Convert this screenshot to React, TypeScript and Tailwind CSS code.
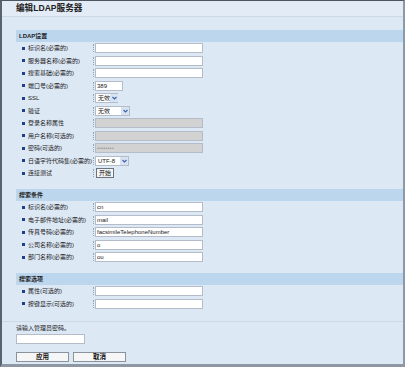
import React from 'react';

const font = { fontFamily: '"Liberation Sans", "Noto Sans CJK SC", sans-serif' };

const Field = ({ label, children }: { label: string; children: React.ReactNode }) => (
   <div className="flex items-center h-[12.5px]">
      <div className="flex items-center w-[77px] pl-[6px] gap-[3px] shrink-0">
         <span className="w-[3px] h-[3px] bg-[#1f3f8a] shrink-0" />
         <span className="text-[6px] leading-none text-[#222] whitespace-nowrap">{label}</span>
      </div>
      <span className="w-px h-[8px] border-l border-dotted border-[#9aa4b0] mr-[1px] shrink-0" />
      {children}
   </div>
);

const Input = ({ value = '', w = 'w-[108px]', gray = false }: { value?: string; w?: string; gray?: boolean }) => (
   <div className={`${w} h-[10px] shrink-0 border border-[#b3bcc8] ${gray ? 'bg-[#d2d2d2]' : 'bg-white'} flex items-center px-[1px]`}>
      <span className={`text-[6px] leading-none whitespace-nowrap ${gray ? 'text-[#9a9a9a]' : 'text-[#222]'}`}>{value}</span>
   </div>
);

const Select = ({ value, w }: { value: string; w: string }) => (
   <div className={`${w} h-[10px] shrink-0 border border-[#b3bcc8] bg-white flex items-center justify-between pl-[2px]`}>
      <span className="text-[6px] leading-none text-[#222] whitespace-nowrap">{value}</span>
      <span className="w-[8px] h-full shrink-0 bg-[#d7e3f3] flex items-center justify-center">
         <svg width="5" height="4" viewBox="0 0 5 4"><path d="M0.5 1 L2.5 3 L4.5 1" stroke="#3a5fa8" strokeWidth="1.1" fill="none" /></svg>
      </span>
   </div>
);

const Header = ({ title }: { title: string }) => (
   <div className="h-[12px] bg-[#bcd6ee] flex items-center pl-[3px]">
      <span className="text-[6px] font-bold leading-none text-[#222]">{title}</span>
   </div>
);

const App = () => {
   return (
      <div style={font} className="w-[405px] h-[367px] bg-[#dde8f5] border-l-2 border-l-[#59626e] border-t border-t-[#4d5560] border-r-2 border-r-[#8d99a7] border-b-[3px] border-b-[#8e98a4] overflow-hidden">
         <div className="h-[16px] bg-[#e3ecf6] border-b border-[#cdd9e7] flex items-center pl-[14px]">
            <span className="text-[8.6px] font-bold text-[#222] leading-none">编辑LDAP服务器</span>
         </div>
         <div className="pl-[14px] pt-[13px]">
            <Header title="LDAP设置" />
            <Field label="标识名(必需的)"><Input /></Field>
            <Field label="服务器名称(必需的)"><Input /></Field>
            <Field label="搜索基础(必需的)"><Input /></Field>
            <Field label="端口号(必需的)"><Input value="389" w="w-[28px]" /></Field>
            <Field label="SSL"><Select value="无效" w="w-[23px]" /></Field>
            <Field label="验证"><Select value="无效" w="w-[35px]" /></Field>
            <Field label="登录名称属性"><Input gray /></Field>
            <Field label="用户名称(可选的)"><Input gray /></Field>
            <Field label="密码(可选的)"><Input gray value="••••••••" /></Field>
            <Field label="日语字符代码集(必需的)"><Select value="UTF-8" w="w-[34px]" /></Field>
            <Field label="连接测试">
               <button className="h-[10px] px-[2px] border border-[#6b7480] bg-[#f4f4f4] text-[6px] leading-none text-[#111] ml-[1px]">开始</button>
            </Field>

            <div className="h-[9px]" />
            <Header title="搜索条件" />
            <div className="flex flex-col">
               <div className="h-[0.5px]" />
               <Field label="标识名(必需的)"><Input value="cn" /></Field>
               <Field label="电子邮件地址(必需的)"><Input value="mail" /></Field>
               <Field label="传真号码(必需的)"><Input value="facsimileTelephoneNumber" /></Field>
               <Field label="公司名称(必需的)"><Input value="o" /></Field>
               <Field label="部门名称(必需的)"><Input value="ou" /></Field>
            </div>

            <div className="h-[9.5px]" />
            <Header title="搜索选项" />
            <Field label="属性(可选的)"><Input /></Field>
            <Field label="按键显示(可选的)"><Input /></Field>
         </div>
         <div className="mt-[11px] border-t border-[#cdd9e7] pl-[14px] pt-[3px]">
            <div className="text-[6px] leading-none text-[#222] mb-[3px]">请输入管理员密码。</div>
            <div className="w-[69px] h-[10px] border border-[#b3bcc8] bg-white" />
            <div className="flex gap-[4px] mt-[8px]">
               <button className="w-[53px] h-[10px] border border-[#8a929c] bg-[#f6f6f6] text-[6.5px] font-bold leading-none text-[#111]">应用</button>
               <button className="w-[53px] h-[10px] border border-[#8a929c] bg-[#f6f6f6] text-[6.5px] font-bold leading-none text-[#111]">取消</button>
            </div>
         </div>
      </div>
   );
};

export default App;
